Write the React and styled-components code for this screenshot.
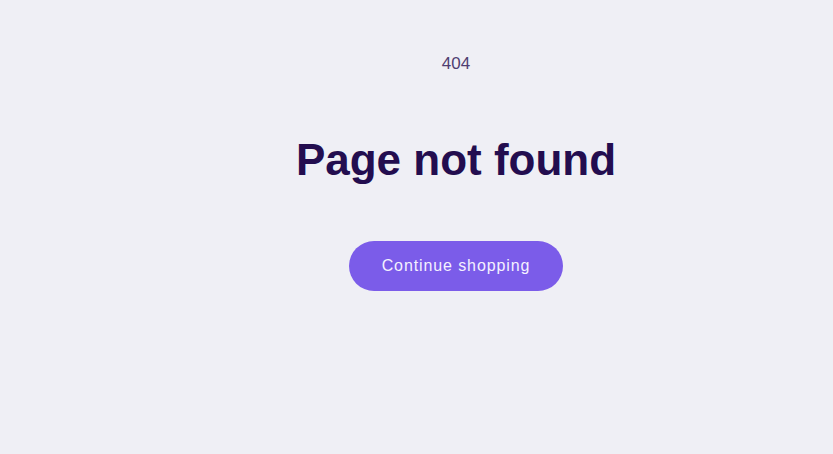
import styled, { createGlobalStyle } from 'styled-components';

/* ---------------------------------- style --------------------------------- */
const GlobalStyle = createGlobalStyle`
  html, body {
    margin: 0;
    background: #efeff5;
  }
  body {
    font-family: 'Liberation Sans', Arial, sans-serif;
  }
`;

const NotFoundView = styled.main`
  display: flex;
  flex-direction: column;
  align-items: center;
  text-align: center;
  padding: 54px 0 0 79px;
  min-height: 454px;
  box-sizing: border-box;
`;

const ErrorCode = styled.p`
  margin: 0;
  font-size: 17px;
  line-height: 20px;
  color: #4f3e72;
`;

const Title = styled.h1`
  margin: 60px 0 0;
  font-size: 44px;
  line-height: 52px;
  font-weight: 700;
  color: #230d4f;
`;

const ShopButton = styled.a`
  display: inline-flex;
  align-items: center;
  justify-content: center;
  margin-top: 55px;
  width: 214px;
  height: 50px;
  border-radius: 25px;
  background: #7b5ce9;
  color: #f4f1ff;
  font-size: 16px;
  letter-spacing: 0.9px;
  text-decoration: none;
  cursor: pointer;
`;

/* -------------------------------- component ------------------------------- */
const App = () => (
  <>
    <GlobalStyle />
    <NotFoundView>
      <ErrorCode>404</ErrorCode>
      <Title>Page not found</Title>
      <ShopButton href="#">Continue shopping</ShopButton>
    </NotFoundView>
  </>
);

export default App;
